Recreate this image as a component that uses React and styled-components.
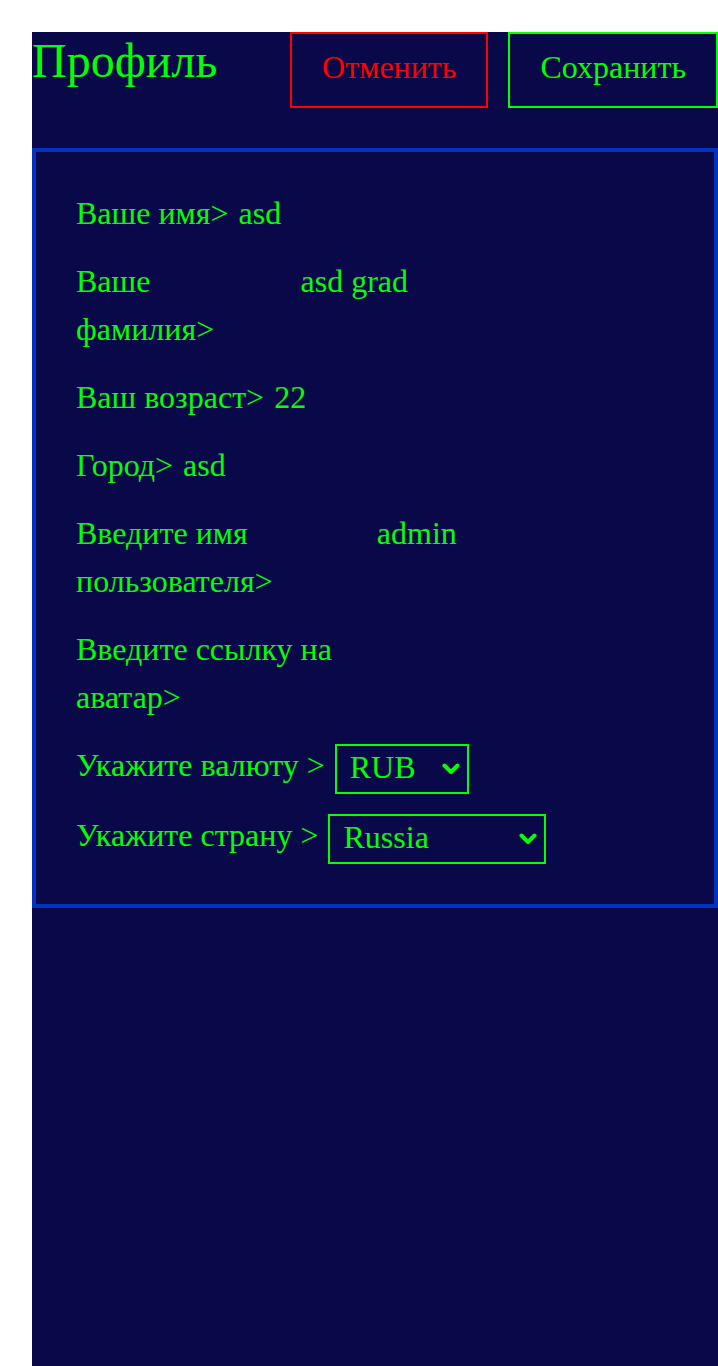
import React, { useState } from 'react'
import styled, { createGlobalStyle } from 'styled-components'

const GREEN = '#04ff04'
const BG = '#090949'
const BLUE = '#0232c2'

const GlobalStyle = createGlobalStyle`
  html, body {
    margin: 0;
    padding: 0;
    background: #ffffff;
  }
  body {
    font-family: "Liberation Serif", "Times New Roman", serif;
  }
`

const Page = styled.div`
  padding: 32px 0 0 32px;
  background: #ffffff;
`

const Content = styled.main`
  background: ${BG};
  min-height: calc(100vh - 32px);
  color: ${GREEN};
`

const Header = styled.header`
  display: flex;
  justify-content: space-between;
  align-items: flex-start;
  margin-bottom: 40px;
`

const Title = styled.h1`
  margin: 0;
  font-size: 48px;
  line-height: 58px;
  font-weight: 400;
  color: ${GREEN};
`

const Actions = styled.div`
  display: flex;
  gap: 20px;
`

const Button = styled.button`
  margin: 0;
  padding: 15px 30px 21px;
  font-family: inherit;
  font-size: 32px;
  line-height: 36px;
  background: transparent;
  border: 2px solid ${({ $color }) => $color};
  color: ${({ $color }) => $color};
  cursor: pointer;
`

const Card = styled.section`
  border: 4px solid ${BLUE};
  padding: 37px 40px 40px;
  display: flex;
  flex-direction: column;
  gap: 20px;
`

const Field = styled.label`
  display: flex;
  gap: 8px;
`

const Placeholder = styled.div`
  flex: 0 1 auto;
  font-size: 32px;
  line-height: 48px;
`

const TextInput = styled.input`
  flex: 0 1 386px;
  min-width: 0;
  padding: 1px 2px;
  border: none;
  outline: none;
  background: transparent;
  color: ${GREEN};
  font-family: inherit;
  font-size: 32px;
  line-height: 46px;
  height: 48px;
  box-sizing: border-box;
  align-self: flex-start;
`

const SelectGroup = styled.div`
  display: flex;
  flex-direction: column;
  gap: 20px;
  margin-top: 3px;
`

const SelectRow = styled.label`
  display: flex;
  align-items: flex-start;
  gap: 10px;
`

const SelectLabel = styled.span`
  font-size: 32px;
  line-height: 42px;
`

const SelectWrap = styled.span`
  position: relative;
  display: inline-flex;
`

const SelectBox = styled.select`
  appearance: none;
  -webkit-appearance: none;
  margin: 0;
  padding: 3px 51px 7px 13px;
  border: 2px solid ${GREEN};
  background: transparent;
  color: ${GREEN};
  font-family: inherit;
  font-size: 32px;
  line-height: 36px;
  height: 50px;
  box-sizing: border-box;
  outline: none;
  border-radius: 0;

  option {
    background: ${BG};
    color: ${GREEN};
  }
`

const Chevron = styled.svg`
  position: absolute;
  right: 9px;
  top: 50%;
  transform: translateY(-50%);
  pointer-events: none;
`

const currencies = ['RUB', 'EUR', 'USD']
const countries = ['Russia', 'Belarus', 'Ukraine', 'Kazakhstan', 'Armenia']

const Select = ({ value, options, onChange }) => (
  <SelectWrap>
    <SelectBox value={value} onChange={onChange}>
      {options.map((o) => (
        <option key={o} value={o}>
          {o}
        </option>
      ))}
    </SelectBox>
    <Chevron width="18" height="12" viewBox="0 0 18 12">
      <polyline
        points="2.5,2.5 9,9 15.5,2.5"
        fill="none"
        stroke={GREEN}
        strokeWidth="4"
        strokeLinecap="round"
        strokeLinejoin="round"
      />
    </Chevron>
  </SelectWrap>
)

const App = () => {
  const [form, setForm] = useState({
    first: 'asd',
    lastname: 'asd grad',
    age: '22',
    city: 'asd',
    username: 'admin',
    avatar: '',
    currency: 'RUB',
    country: 'Russia',
  })

  const onChange = (key) => (e) => setForm({ ...form, [key]: e.target.value })

  const fields = [
    { key: 'first', label: 'Ваше имя' },
    { key: 'lastname', label: 'Ваше фамилия' },
    { key: 'age', label: 'Ваш возраст' },
    { key: 'city', label: 'Город' },
    { key: 'username', label: 'Введите имя пользователя' },
    { key: 'avatar', label: 'Введите ссылку на аватар' },
  ]

  return (
    <Page>
      <GlobalStyle />
      <Content>
        <Header>
          <Title>Профиль</Title>
          <Actions>
            <Button $color="#ff0000">Отменить</Button>
            <Button $color={GREEN}>Сохранить</Button>
          </Actions>
        </Header>
        <Card>
          {fields.map((f) => (
            <Field key={f.key}>
              <Placeholder>{`${f.label}>`}</Placeholder>
              <TextInput value={form[f.key]} onChange={onChange(f.key)} />
            </Field>
          ))}
          <SelectGroup>
            <SelectRow>
              <SelectLabel>Укажите валюту &gt;</SelectLabel>
              <Select
                value={form.currency}
                options={currencies}
                onChange={onChange('currency')}
              />
            </SelectRow>
            <SelectRow>
              <SelectLabel>Укажите страну &gt;</SelectLabel>
              <Select
                value={form.country}
                options={countries}
                onChange={onChange('country')}
              />
            </SelectRow>
          </SelectGroup>
        </Card>
      </Content>
    </Page>
  )
}

export default App
